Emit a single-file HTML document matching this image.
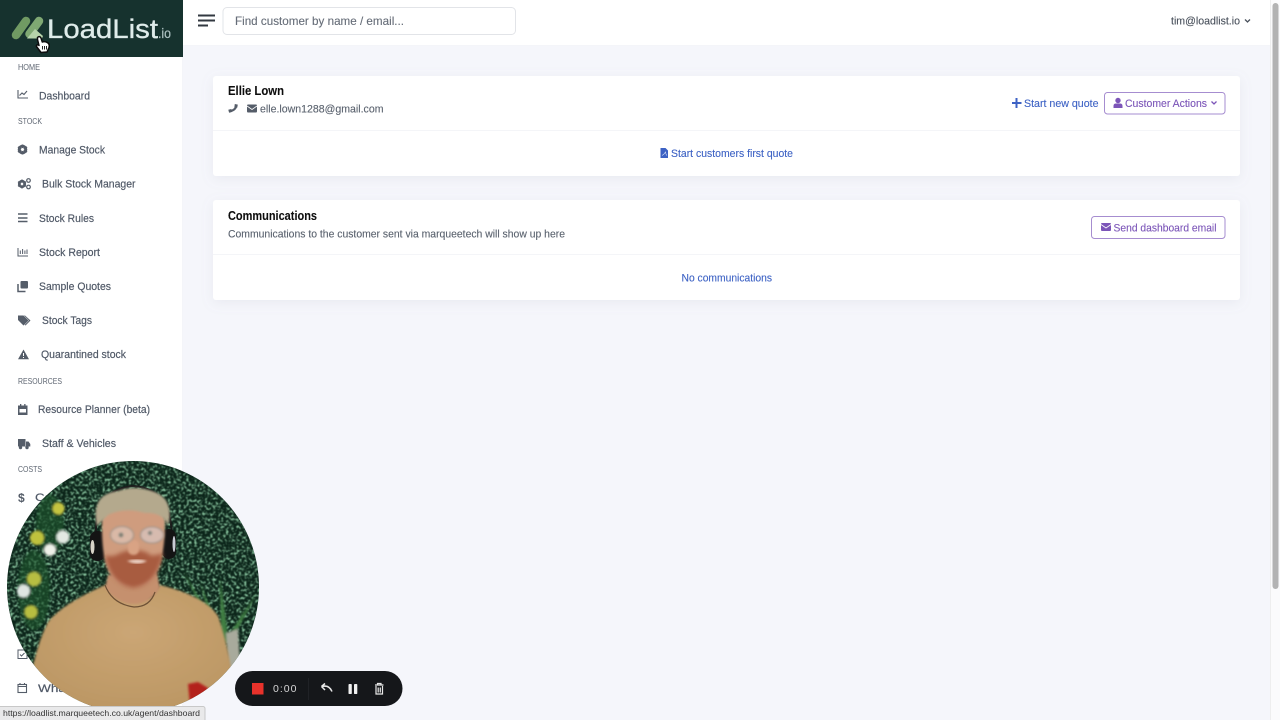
<!DOCTYPE html>
<html><head><meta charset="utf-8"><title>LoadList</title>
<style>
html,body{margin:0;padding:0;width:1280px;height:720px;overflow:hidden;background:#f5f6fb}
svg{display:block;position:absolute;left:0;top:0}
text{font-family:"Liberation Sans",sans-serif}
.n{font-size:11px;fill:#4f5866;stroke:#4f5866;stroke-width:.18px}
.h{font-size:8px;fill:#5e6672}
.i{fill:#555d69}
.b{fill:#3d62c4;font-size:11px;stroke:#3d62c4;stroke-width:.12px}
.p{fill:#7b55b8;font-size:11px;stroke:#7b55b8;stroke-width:.12px}
.t{font-size:12.5px;fill:#111;stroke:#111;stroke-width:.1px;font-weight:bold}
.g{font-size:11px;fill:#5a626e;stroke:#5a626e;stroke-width:.12px}
</style></head><body>
<svg width="1280" height="720" viewBox="0 0 1280 720" xmlns="http://www.w3.org/2000/svg">
<defs>
<filter id="soft" x="-2%" y="-2%" width="104%" height="104%"><feGaussianBlur stdDeviation="0.32"/></filter>
<filter id="shadow" x="-5%" y="-20%" width="110%" height="150%"><feDropShadow dx="0" dy="3" stdDeviation="6" flood-color="#8890a8" flood-opacity="0.12"/></filter>
<filter id="leaf" x="0" y="0" width="100%" height="100%">
<feTurbulence type="fractalNoise" baseFrequency="0.38" numOctaves="3" seed="5"/>
<feColorMatrix values="0 0 0 0 0.26  0 0 0 0 0.58  0 0 0 0 0.36  4 0 0 0 -1.95"/>
<feGaussianBlur stdDeviation="0.45"/>
</filter>
<filter id="b1"><feGaussianBlur stdDeviation="1"/></filter>
<filter id="b2"><feGaussianBlur stdDeviation="2.2"/></filter>
<clipPath id="cam"><circle cx="133" cy="587" r="126"/></clipPath>
<radialGradient id="shirt" cx="50%" cy="35%" r="75%"><stop offset="0" stop-color="#cba675"/><stop offset="1" stop-color="#b8935f"/></radialGradient>
</defs>

<!-- page -->
<rect width="1280" height="720" fill="#f5f6fb"/>
<rect x="183" width="1087" height="45" fill="#fff"/>
<rect x="183" y="45" width="1087" height="1" fill="#f4f5f9"/>
<rect width="183" height="720" fill="#fff"/>
<rect x="182" y="57" width="1" height="663" fill="#f4f5f9"/>

<!-- scrollbar -->
<rect x="1270" width="10" height="720" fill="#fbfbfc"/>
<rect x="1270" width="1" height="720" fill="#eeeeee"/>
<rect x="1272.5" y="3" width="6" height="586" rx="3" fill="#b3b3b3"/>

<g filter="url(#soft)">
<!-- logo -->
<rect width="183" height="57" fill="#17302f"/>
<path d="M16 35L26 21" stroke="#6f9a63" stroke-width="8.500" stroke-linecap="round"/>
<path d="M29.500 34L39 21" stroke="#7fa873" stroke-width="8.500" stroke-linecap="round"/>
<path d="M27 38.500 L35 29 L43 36 L42 38.500 Z" fill="#b6d3ab"/>
<text x="47" y="38" font-size="26.500" fill="#dfecea" stroke="#dfecea" stroke-width=".3" textLength="111" lengthAdjust="spacingAndGlyphs">LoadList</text>
<text x="158" y="38" font-size="14" fill="#a9bfbe" stroke="#a9bfbe" stroke-width=".3" textLength="13" lengthAdjust="spacingAndGlyphs">.io</text>
<!-- cursor -->
<path d="M37.500 37.500 Q39.500 35.500 41 38 L42.300 42 Q45 41 48 43 Q49.800 44.500 49 47.500 L47 52 L41 52.500 L36.500 46.500 Q36 44.500 38.500 45 L39 45.500 L37.500 39.500 Z" fill="#fff" stroke="#0a0a0a" stroke-width="1.500" stroke-linejoin="round"/>
<path d="M42.500 46v3.500M44.500 46v3.500M46.500 46v3.500" stroke="#0a0a0a" stroke-width=".9"/>

<!-- hamburger -->
<path d="M198 15.500h17M198 20.500h17M198 25.500h10" stroke="#33383f" stroke-width="2.100" fill="none"/>
<!-- search -->
<rect x="223" y="7.500" width="292.500" height="27" rx="4" fill="#fff" stroke="#e2e4e8"/>
<text x="235" y="25" font-size="12" fill="#666d78" stroke="#666d78" stroke-width=".12" textLength="169" lengthAdjust="spacingAndGlyphs">Find customer by name / email...</text>
<!-- user -->
<text x="1171" y="24.500" font-size="11" fill="#4a515c" stroke="#4a515c" stroke-width=".12" textLength="69" lengthAdjust="spacingAndGlyphs">tim@loadlist.io</text>
<path d="M1245 19.500l2.500 2.500 2.500-2.500" stroke="#4a515c" stroke-width="1.300" fill="none"/>

<!-- sidebar labels -->
<text class="h" x="18" y="70" textLength="22" lengthAdjust="spacingAndGlyphs">HOME</text>
<text class="h" x="18" y="124" textLength="24" lengthAdjust="spacingAndGlyphs">STOCK</text>
<text class="h" x="18" y="384" textLength="44" lengthAdjust="spacingAndGlyphs">RESOURCES</text>
<text class="h" x="18" y="472" textLength="24" lengthAdjust="spacingAndGlyphs">COSTS</text>

<text class="n" x="39" y="99.500" textLength="51" lengthAdjust="spacingAndGlyphs">Dashboard</text>
<text class="n" x="39" y="153.500" textLength="66" lengthAdjust="spacingAndGlyphs">Manage Stock</text>
<text class="n" x="42" y="187.500" textLength="93.500" lengthAdjust="spacingAndGlyphs">Bulk Stock Manager</text>
<text class="n" x="39" y="222" textLength="55" lengthAdjust="spacingAndGlyphs">Stock Rules</text>
<text class="n" x="39" y="256" textLength="61" lengthAdjust="spacingAndGlyphs">Stock Report</text>
<text class="n" x="39" y="290" textLength="72" lengthAdjust="spacingAndGlyphs">Sample Quotes</text>
<text class="n" x="42" y="324" textLength="50" lengthAdjust="spacingAndGlyphs">Stock Tags</text>
<text class="n" x="41" y="358" textLength="85" lengthAdjust="spacingAndGlyphs">Quarantined stock</text>
<text class="n" x="38" y="413" textLength="112" lengthAdjust="spacingAndGlyphs">Resource Planner (beta)</text>
<text class="n" x="42" y="447" textLength="74" lengthAdjust="spacingAndGlyphs">Staff &amp; Vehicles</text>
<text class="n" x="35" y="501" textLength="34" lengthAdjust="spacingAndGlyphs">Costs</text>
<text class="n" x="38" y="692" textLength="60" lengthAdjust="spacingAndGlyphs">What's on</text>

<!-- sidebar icons -->
<path d="M18 90v8h10M19.500 95.500l2.500-2.500 2 1.500 3-3.500" stroke="#555d69" stroke-width="1.100" fill="none"/>
<circle cx="22.500" cy="149.500" r="3.500" fill="none" stroke="#555d69" stroke-width="2.600"/>
<path d="M22.500 144.500v10M18 147l9 5M18 152l9-5" stroke="#555d69" stroke-width="1.800"/>
<circle cx="22.500" cy="149.500" r="1.500" fill="#fff"/>
<circle cx="22" cy="184" r="3" fill="none" stroke="#555d69" stroke-width="2.200"/>
<path d="M22 179.500v9M18 181.700l8 4.600M18 186.300l8-4.600" stroke="#555d69" stroke-width="1.400"/>
<circle cx="22" cy="184" r="1.200" fill="#fff"/>
<circle cx="28.500" cy="180.500" r="1.800" fill="none" stroke="#555d69" stroke-width="1.200"/>
<circle cx="28.500" cy="187" r="1.800" fill="none" stroke="#555d69" stroke-width="1.200"/>
<path d="M18 214h9.500M18 218h9.500M18 221.500h9.500" stroke="#555d69" stroke-width="1.500" fill="none"/>
<path d="M18 248v8h10M20.300 250.500v3.500M22.600 249v5M24.900 250.500v3.500M27 249.500v4.500" stroke="#555d69" stroke-width="1" fill="none"/>
<rect class="i" x="20.500" y="281" width="7.500" height="7.500" rx="1"/>
<path d="M18 284v7.500h7.500" stroke="#555d69" stroke-width="1.500" fill="none"/>
<path class="i" d="M18 315.500h5.500l5 5-5 5-5.500-5.500zM25 315.500l5.500 5-5 5-.8-.6 4.300-4.400-5-5z"/>
<path class="i" d="M23.500 349.500l5.500 9.800h-11z"/><rect x="23" y="353" width="1" height="3" fill="#fff"/><rect x="23" y="357" width="1" height="1" fill="#fff"/>
<path class="i" d="M18 405.500h9.500v9.500h-9.500zM20 404h1.300v2h-1.300zM24.200 404h1.300v2h-1.300z"/>
<rect x="19.500" y="409" width="6.500" height="3.500" fill="#fff"/>
<path class="i" d="M18 439h7.500v7.500h-7.500zM26 441.500h2.500l1.800 2.500v2.500h-4.300z"/>
<circle class="i" cx="20.500" cy="447.500" r="1.700"/><circle class="i" cx="27" cy="447.500" r="1.700"/>
<text x="18" y="502" font-size="12" font-weight="bold" fill="#555d69">$</text>
<rect x="18" y="650" width="9" height="8.500" fill="none" stroke="#555d69" stroke-width="1"/>
<path d="M20 654.500l1.500 1.500 3-3" stroke="#555d69" stroke-width="1" fill="none"/>
<rect x="18" y="684.500" width="8.500" height="8" fill="none" stroke="#555d69" stroke-width="1.100"/>
<path d="M18 686.500h8.500M20 683v2M24.500 683v2" stroke="#555d69" stroke-width="1.100"/>
</g>

<!-- cards -->
<rect x="213" y="76" width="1027" height="100" rx="3" fill="#fff" filter="url(#shadow)"/>
<rect x="213" y="200" width="1027" height="100" rx="3" fill="#fff" filter="url(#shadow)"/>
<rect x="213" y="130" width="1027" height="1" fill="#f4f5f8"/>
<rect x="213" y="254" width="1027" height="1" fill="#f4f5f8"/>

<g filter="url(#soft)">
<text class="t" x="228" y="95" textLength="56" lengthAdjust="spacingAndGlyphs">Ellie Lown</text>
<path d="M236.300 105.200Q235.800 110.200 229.800 111.300" fill="none" stroke="#555d69" stroke-width="2.200"/>
<path class="i" d="M234.800 104l3 .6-.6 3.200-2.800-.8zM228.300 109.800l3-.8.8 2.900-3 .9z"/>
<rect class="i" x="247" y="104.500" width="10" height="8" rx="1"/>
<path d="M247 106l5 3.500 5-3.500" stroke="#fff" stroke-width=".8" fill="none"/>
<text class="g" x="260" y="112.500" textLength="123.500" lengthAdjust="spacingAndGlyphs">elle.lown1288@gmail.com</text>

<path d="M1016.500 98v10M1012 103h9.500" stroke="#3d62c4" stroke-width="2"/>
<text class="b" x="1024" y="107" textLength="74.500" lengthAdjust="spacingAndGlyphs">Start new quote</text>
<rect x="1104.500" y="92.500" width="120.500" height="21.500" rx="3" fill="#fff" stroke="#a68dd0"/>
<circle cx="1118" cy="100.500" r="2.700" fill="#7b55b8"/><path d="M1113.500 108v-2q0-2.500 2.500-2.500h4q2.500 0 2.500 2.500v2z" fill="#7b55b8"/>
<text class="p" x="1125" y="107" textLength="82" lengthAdjust="spacingAndGlyphs">Customer Actions</text>
<path d="M1211.500 101.500l2.500 2.500 2.500-2.500" stroke="#7b55b8" stroke-width="1.300" fill="none"/>

<path d="M660.500 148h5l2.500 2.500v7.500h-7.500z" fill="#3d62c4"/>
<path d="M662 155.500q2-1 3.500-3.500q.5 3 1.500 3.500" stroke="#dfe6f8" stroke-width=".6" fill="none"/>
<text class="b" x="671" y="157" textLength="122" lengthAdjust="spacingAndGlyphs">Start customers first quote</text>

<text class="t" x="228" y="220" textLength="89" lengthAdjust="spacingAndGlyphs">Communications</text>
<text class="g" x="228" y="237.500" textLength="337" lengthAdjust="spacingAndGlyphs">Communications to the customer sent via marqueetech will show up here</text>
<rect x="1091.500" y="216.500" width="133.500" height="22" rx="3" fill="#fff" stroke="#a68dd0"/>
<rect x="1101" y="223" width="10" height="8" rx="1" fill="#7b55b8"/>
<path d="M1101 224.500l5 3.500 5-3.500" stroke="#fff" stroke-width=".8" fill="none"/>
<text class="p" x="1113.500" y="231.500" textLength="103" lengthAdjust="spacingAndGlyphs">Send dashboard email</text>
<text class="b" x="681.500" y="281.500" textLength="90.500" lengthAdjust="spacingAndGlyphs">No communications</text>
</g>

<!-- webcam -->
<g clip-path="url(#cam)">
<rect x="5" y="458" width="258" height="256" fill="#0b2419"/>
<rect x="5" y="458" width="258" height="256" filter="url(#leaf)"/>
<!-- flowers & plant -->
<g filter="url(#b1)">
<ellipse cx="34" cy="590" rx="16" ry="40" fill="#1c5228" opacity=".65"/>
<ellipse cx="50" cy="525" rx="14" ry="30" fill="#1c5228" opacity=".65"/>
<circle cx="37" cy="538" r="7" fill="#bfc23c"/>
<circle cx="58.500" cy="508.500" r="6" fill="#c4c43f"/>
<circle cx="34" cy="579" r="7" fill="#b8be42"/>
<circle cx="31" cy="612" r="6.500" fill="#b8bd3f"/>
<circle cx="63" cy="537" r="6.500" fill="#e3e9e2"/>
<circle cx="50" cy="550" r="6" fill="#eef0e8"/>
<circle cx="23.500" cy="591" r="6.500" fill="#dfe6e2"/>
<path d="M224 642L183 570L214 636L200 582L221 636L220 577L228 636L257 593L232 640L246 602L232 645Z" fill="#3f7f42"/>
<path d="M226 633l12-4 2 34-12 8z" fill="#a8aa9c"/>
</g>
<!-- neck & shirt -->
<path d="M28 720 Q28 662 48 622 Q62 604 105 585 L125 596 L150 598 L160 585 Q205 596 218 616 Q232 655 238 720 Z" fill="url(#shirt)" filter="url(#b1)"/>
<path d="M190 706l-2-22 10-2 10 6v18z" fill="#b3231e" filter="url(#b1)"/>
<path d="M108 575 L105 588 Q118 604 134 604 Q150 604 160 588 L157 573 Z" fill="#c5906e" filter="url(#b1)"/>
<path d="M105 585 Q112 604 134 607 Q150 607 155 592" fill="none" stroke="#6e5136" stroke-width="1.200"/>
<!-- headphones -->
<path d="M96 535 Q94 490 133 486 Q170 488 172 535" fill="none" stroke="#1a1a1a" stroke-width="2"/>
<rect x="90" y="531" width="15" height="30" rx="7" fill="#141414"/>
<rect x="162" y="529" width="14" height="30" rx="7" fill="#141414"/>
<ellipse cx="92.500" cy="547" rx="2" ry="7" fill="#d8d4c8"/>
<ellipse cx="174" cy="544" rx="1.500" ry="8" fill="#c8ccd4"/>
<!-- face -->
<path d="M102 520 Q101 570 116 581 Q133 593 150 582 Q165 568 165 520 Q160 492 133 492 Q106 492 102 520 Z" fill="#cf9c7e" filter="url(#b1)"/>
<path d="M105 555 Q110 584 133 588 Q157 585 163 553 Q150 558 148 553 Q134 547 120 553 Q112 558 105 555Z" fill="#a85c40" filter="url(#b2)"/>
<rect x="128" y="540" width="11" height="15" rx="5" fill="#d9a384" filter="url(#b1)"/>
<path d="M127 561 Q137 558 147 561 Q138 566 127 561Z" fill="#ecd2c4" filter="url(#b1)"/>
<!-- hair -->
<path d="M97 526 Q90 494 118 491 Q134 485 152 491 Q175 498 168 526 Q163 512 145 513 Q125 507 108 515 Z" fill="#b4a98d" filter="url(#b1)"/>
<!-- glasses -->
<g filter="url(#b1)">
<ellipse cx="122" cy="535" rx="11.500" ry="8.500" fill="#e6dcd6" fill-opacity=".45" stroke="#a39488" stroke-width="1.300"/>
<ellipse cx="152" cy="535" rx="11.500" ry="8" fill="#dfe0ea" fill-opacity=".45" stroke="#a39488" stroke-width="1.300"/>
<circle cx="121" cy="535" r="2.500" fill="#5b6a5e" opacity=".7"/><circle cx="150" cy="533" r="2.200" fill="#5b6a5e" opacity=".7"/>
</g>
</g>

<!-- status bar -->
<rect x="0" y="707" width="205" height="13" fill="#e9e9ea"/>
<path d="M0 706.500h203a2 2 0 0 1 2 2V720" fill="none" stroke="#c8c8c8"/>
<text x="3" y="716" font-size="8.500" fill="#333" textLength="197" lengthAdjust="spacingAndGlyphs">https://loadlist.marqueetech.co.uk/agent/dashboard</text>

<!-- recorder -->
<rect x="235" y="671" width="167.500" height="35" rx="17.500" fill="#15171a"/>
<rect x="252" y="683" width="11.500" height="11.500" fill="#e8322b"/>
<text x="273" y="692" font-size="10.500" fill="#d6d6d6" textLength="23.500" lengthAdjust="spacing">0:00</text>
<rect x="308" y="678" width="1" height="22" fill="#202226"/>
<path d="M321.500 686.500l3.500 3.500M321.500 686.500l3.500-3M322 686.500q7-2 10 5" stroke="#e8e8e8" stroke-width="1.500" fill="none"/>
<rect x="348.500" y="684" width="3.300" height="10" rx=".8" fill="#f0f0f0"/>
<rect x="354" y="684" width="3.300" height="10" rx=".8" fill="#f0f0f0"/>
<path d="M375 685h8.500M377.500 685v-1.500h3.500v1.500M376 686v8h6.500v-8M378.200 687.500v5M380.300 687.500v5" stroke="#e8e8e8" stroke-width="1.200" fill="none"/>
</svg>
</body></html>
